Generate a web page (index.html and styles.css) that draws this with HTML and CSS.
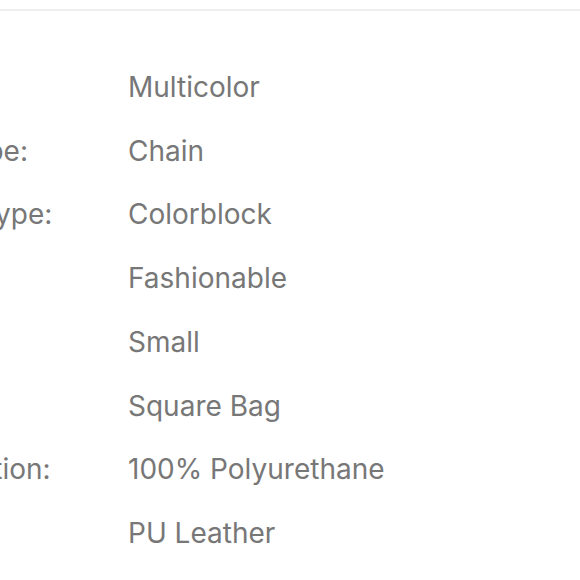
FILE: index.html
```html
<!DOCTYPE html>
<html lang="en">
<head>
<meta charset="utf-8">
<link rel="stylesheet" href="styles.css">
</head>
<body>
<div class="page">
  <div class="divider"></div>
  <dl class="attrs">
    <div class="row"><dt>Color:</dt><dd>Multicolor</dd></div>
    <div class="row"><dt>Strap Type:</dt><dd>Chain</dd></div>
    <div class="row"><dt>Pattern Type:</dt><dd>Colorblock</dd></div>
    <div class="row"><dt>Style:</dt><dd>Fashionable</dd></div>
    <div class="row"><dt>Size:</dt><dd>Small</dd></div>
    <div class="row"><dt>Type:</dt><dd>Square Bag</dd></div>
    <div class="row"><dt>Composition:</dt><dd>100% Polyurethane</dd></div>
    <div class="row"><dt>Material:</dt><dd>PU Leather</dd></div>
  </dl>
</div>
</body>
</html>
```

FILE: styles.css
```css
html, body {
  margin: 0;
  padding: 0;
  background: #fff;
}
.page {
  width: 580px;
  height: 580px;
  overflow: hidden;
  font-family: Inter, "Noto Sans", sans-serif;
  color: #777777;
}
.divider {
  margin-top: 9px;
  height: 2px;
  background: #eeeeee;
}
.attrs {
  margin: 44px 0 0 -124px;
  padding: 0;
}
.row {
  display: grid;
  grid-template-columns: 252px 1fr;
  height: 63.75px;
  align-items: center;
}
dt, dd {
  margin: 0;
  font-size: 28px;
  line-height: 34px;
  white-space: nowrap;
}
```
